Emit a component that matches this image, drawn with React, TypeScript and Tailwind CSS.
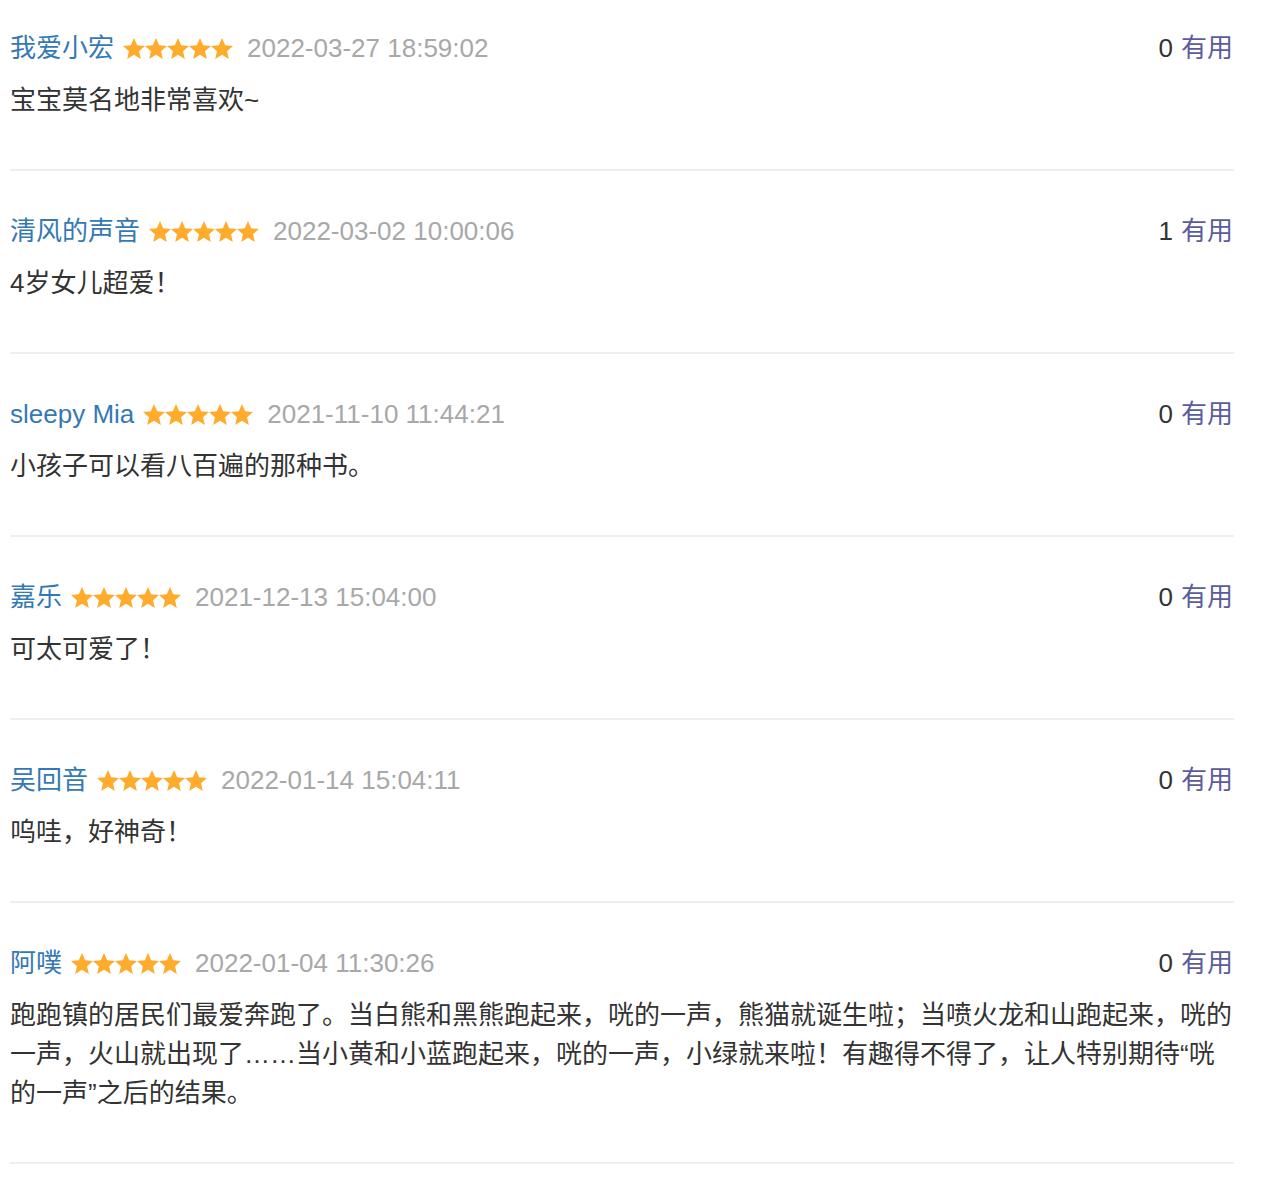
const reviews = [
  { name: "我爱小宏", time: "2022-03-27 18:59:02", useful: 0, text: "宝宝莫名地非常喜欢~" },
  { name: "清风的声音", time: "2022-03-02 10:00:06", useful: 1, text: "4岁女儿超爱！" },
  { name: "sleepy Mia", time: "2021-11-10 11:44:21", useful: 0, text: "小孩子可以看八百遍的那种书。" },
  { name: "嘉乐", time: "2021-12-13 15:04:00", useful: 0, text: "可太可爱了！" },
  { name: "吴回音", time: "2022-01-14 15:04:11", useful: 0, text: "呜哇，好神奇！" },
  {
    name: "阿噗",
    time: "2022-01-04 11:30:26",
    useful: 0,
    text: "跑跑镇的居民们最爱奔跑了。当白熊和黑熊跑起来，咣的一声，熊猫就诞生啦；当喷火龙和山跑起来，咣的一声，火山就出现了……当小黄和小蓝跑起来，咣的一声，小绿就来啦！有趣得不得了，让人特别期待“咣的一声”之后的结果。",
  },
]

function Star() {
  return (
    <svg viewBox="1 1.2 22 21.2" className="h-[21px] w-[22px]">
      <path
        fill="#ffab2b"
        d="M12 1.2l3.2 7.3 7.9.7-6 5.3 1.8 7.8L12 18.2l-6.9 4.1 1.8-7.8-6-5.3 7.9-.7z"
      />
    </svg>
  )
}

export default function App() {
  return (
    <div
      className="min-h-screen bg-white text-[26px] text-[#333]"
      style={{ fontFamily: '"Liberation Sans", "Noto Sans CJK SC", sans-serif' }}
    >
      <div className="w-[1234px] pl-[10px]">
        {reviews.map((r, i) => (
          <div
            key={i}
            className={`border-b-2 border-[#eeeeee] pb-[49px] ${i === 0 ? "pt-[30px]" : "pt-[42px]"}`}
          >
            {/* header */}
            <div className="flex h-[36px] items-center justify-between">
              <div className="flex items-center">
                <span className="text-[#3479b5]">{r.name}</span>
                <span className="ml-[9px] flex">
                  {[0, 1, 2, 3, 4].map((s) => (
                    <Star key={s} />
                  ))}
                </span>
                <span className="ml-[14px] text-[#a8a8a8]">{r.time}</span>
              </div>
              <div className="pr-[1px]">
                <span className="text-[#333]">{r.useful}</span>
                <span className="ml-[8px] text-[#5c5c9d]">有用</span>
              </div>
            </div>
            {/* body */}
            <p className="mt-[15px] leading-[39px]">{r.text}</p>
          </div>
        ))}
      </div>
    </div>
  )
}
